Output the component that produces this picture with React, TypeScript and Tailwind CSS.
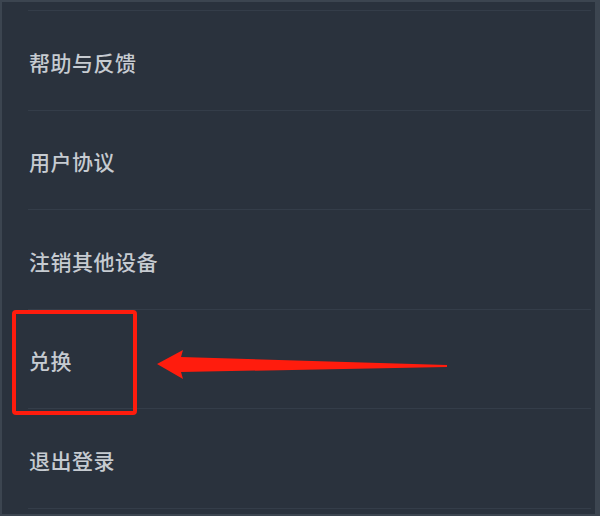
import React from "react";

const items = ["帮助与反馈", "用户协议", "注销其他设备", "兑换", "退出登录"];

function Arrow() {
  return (
    <svg
      className="absolute left-[148px] top-[342px]"
      width="300"
      height="40"
      viewBox="150 344 300 40"
    >
      <polygon
        points="157,364 183,350 181,357 447,365 447,367 181,372 183,379"
        fill="#ff1c0d"
      />
    </svg>
  );
}

export default function App() {
  return (
    <div
      className="relative w-[600px] h-[516px] overflow-hidden bg-[#2a323d] border-l-2 border-t-2 border-b-2 border-r-[5px] border-[#3c4550]"
      style={{ fontFamily: '"Noto Sans CJK SC", "Noto Sans", sans-serif' }}
    >
      <div className="pt-[8px] pl-[26px] pr-[4px]">
        <div className="border-b border-[#343d49]">
          {items.map((label) => (
            <div
              key={label}
              className="h-[99.6px] border-t border-[#343d49] flex items-center pt-[4px] text-[21px] font-medium text-[#c6cbd1] tracking-[0.5px]"
            >
              <span className="pl-[1px]">{label}</span>
            </div>
          ))}
        </div>
      </div>
      <div className="absolute left-[10px] top-[308px] w-[125px] h-[105px] border-[4px] border-[#ff1c0d] rounded-[4px]" />
      <Arrow />
    </div>
  );
}
